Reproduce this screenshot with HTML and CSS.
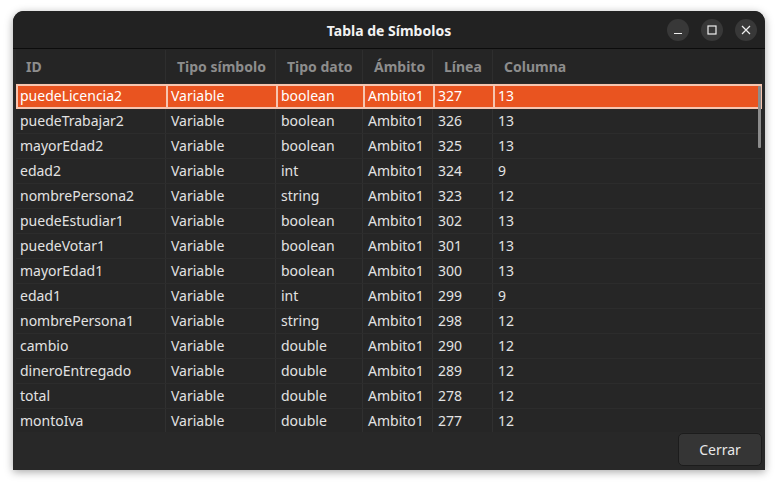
FILE: index.html
```html
<!DOCTYPE html>
<html lang="es">
<head>
<meta charset="utf-8">
<title>Tabla de Símbolos</title>
<link rel="stylesheet" href="styles.css">
</head>
<body>
<div class="window">
  <div class="titlebar">
    <div class="title">Tabla de Símbolos</div>
    <div class="controls">
      <span class="ctl"><svg width="10" height="10" viewBox="0 0 10 10"><path d="M1 8.5h8" stroke="#eee" stroke-width="1.2"/></svg></span>
      <span class="ctl"><svg width="10" height="10" viewBox="0 0 10 10"><rect x="1" y="1" width="8" height="8" fill="none" stroke="#eee" stroke-width="1.2"/></svg></span>
      <span class="ctl"><svg width="10" height="10" viewBox="0 0 10 10"><path d="M1 1l8 8M9 1l-8 8" stroke="#eee" stroke-width="1.2"/></svg></span>
    </div>
  </div>
  <div class="content">
    <div class="table">
      <div class="row head">
        <div class="c">ID</div><div class="c">Tipo símbolo</div><div class="c">Tipo dato</div><div class="c">Ámbito</div><div class="c">Línea</div><div class="c">Columna</div>
      </div>
      <div class="body">
        <div class="row sel"><div class="c">puedeLicencia2</div><div class="c">Variable</div><div class="c">boolean</div><div class="c">Ambito1</div><div class="c">327</div><div class="c">13</div></div>
        <div class="row"><div class="c">puedeTrabajar2</div><div class="c">Variable</div><div class="c">boolean</div><div class="c">Ambito1</div><div class="c">326</div><div class="c">13</div></div>
        <div class="row"><div class="c">mayorEdad2</div><div class="c">Variable</div><div class="c">boolean</div><div class="c">Ambito1</div><div class="c">325</div><div class="c">13</div></div>
        <div class="row"><div class="c">edad2</div><div class="c">Variable</div><div class="c">int</div><div class="c">Ambito1</div><div class="c">324</div><div class="c">9</div></div>
        <div class="row"><div class="c">nombrePersona2</div><div class="c">Variable</div><div class="c">string</div><div class="c">Ambito1</div><div class="c">323</div><div class="c">12</div></div>
        <div class="row"><div class="c">puedeEstudiar1</div><div class="c">Variable</div><div class="c">boolean</div><div class="c">Ambito1</div><div class="c">302</div><div class="c">13</div></div>
        <div class="row"><div class="c">puedeVotar1</div><div class="c">Variable</div><div class="c">boolean</div><div class="c">Ambito1</div><div class="c">301</div><div class="c">13</div></div>
        <div class="row"><div class="c">mayorEdad1</div><div class="c">Variable</div><div class="c">boolean</div><div class="c">Ambito1</div><div class="c">300</div><div class="c">13</div></div>
        <div class="row"><div class="c">edad1</div><div class="c">Variable</div><div class="c">int</div><div class="c">Ambito1</div><div class="c">299</div><div class="c">9</div></div>
        <div class="row"><div class="c">nombrePersona1</div><div class="c">Variable</div><div class="c">string</div><div class="c">Ambito1</div><div class="c">298</div><div class="c">12</div></div>
        <div class="row"><div class="c">cambio</div><div class="c">Variable</div><div class="c">double</div><div class="c">Ambito1</div><div class="c">290</div><div class="c">12</div></div>
        <div class="row"><div class="c">dineroEntregado</div><div class="c">Variable</div><div class="c">double</div><div class="c">Ambito1</div><div class="c">289</div><div class="c">12</div></div>
        <div class="row"><div class="c">total</div><div class="c">Variable</div><div class="c">double</div><div class="c">Ambito1</div><div class="c">278</div><div class="c">12</div></div>
        <div class="row"><div class="c">montoIva</div><div class="c">Variable</div><div class="c">double</div><div class="c">Ambito1</div><div class="c">277</div><div class="c">12</div></div>
        <div class="scrollbar"></div>
      </div>
    </div>
    <div class="footer">
      <button class="btn">Cerrar</button>
    </div>
  </div>
</div>
</body>
</html>
```

FILE: styles.css
```css
html, body {
  margin: 0;
  padding: 0;
  background: #ffffff;
  width: 778px;
  height: 486px;
  overflow: hidden;
}
body {
  font-family: "Noto Sans", "Open Sans", sans-serif;
  font-size: 14px;
}
.window {
  margin: 11px 0 0 13px;
  width: 752px;
  height: 459px;
  border-radius: 11px 11px 0 0;
  background: #242424;
  box-shadow: 0 2px 8px rgba(0,0,0,0.35);
  display: flex;
  flex-direction: column;
  overflow: hidden;
}
.titlebar {
  height: 37px;
  flex: none;
  background: #222222;
  border-bottom: 1px solid #0c0c0c;
  display: flex;
  align-items: center;
  justify-content: center;
  position: relative;
}
.title {
  color: #f2f2f2;
  font-weight: bold;
  font-size: 14px;
  margin-top: 1px;
}
.controls {
  position: absolute;
  right: 8px;
  top: 8px;
  display: flex;
  gap: 12px;
}
.ctl {
  width: 22px;
  height: 22px;
  border-radius: 50%;
  background: #383838;
  display: flex;
  align-items: center;
  justify-content: center;
}
.content {
  flex: 1;
  display: flex;
  flex-direction: column;
  background: #282828;
  padding: 0 3px;
}
.table {
  height: 383px;
  flex: none;
  background: #262626;
  display: flex;
  flex-direction: column;
  overflow: hidden;
}
.row {
  display: grid;
  grid-template-columns: 150px 110px 87px 70px 60px 1fr;
  height: 25px;
  flex: none;
  border-bottom: 1px solid #2c2c2c;
  box-sizing: border-box;
  color: #e2e2e2;
}
.row .c {
  padding-left: 5px;
  line-height: 24px;
  white-space: nowrap;
  overflow: hidden;
  border-right: 1px solid #303030;
}
.row .c:first-child { padding-left: 4px; }
.row .c:last-child { border-right: none; }
.head {
  height: 35px;
  background: #252525;
  border-bottom: 1px solid #2a2a2a;
  color: #8d8d8d;
  font-weight: bold;
}
.head .c {
  line-height: 33px;
  padding-left: 11px;
  border-right: 1px solid #2e2e2e;
  margin-top: 1px;
}
.head .c:first-child { padding-left: 10px; }
.body {
  position: relative;
  display: flex;
  flex-direction: column;
  flex: 1;
  overflow: hidden;
}
.row.sel {
  background: #e95420;
  color: #ffffff;
  border: 2px solid #f6c5b0;
  height: 25px;
}
.row.sel .c {
  line-height: 20px;
  padding-left: 3px;
  border-right: 2px solid #f6c5b0;
}
.row.sel .c:first-child { padding-left: 2px; }
.row.sel .c:last-child { border-right: none; }
.scrollbar {
  position: absolute;
  right: 1px;
  top: 2px;
  width: 3px;
  height: 62px;
  background: #8c8c8c;
  border-radius: 1px;
}
.footer {
  flex: 1;
  display: flex;
  justify-content: flex-end;
  align-items: flex-start;
  padding-top: 1px;
}
.btn {
  width: 84px;
  height: 33px;
  background: #353535;
  border: 1px solid #1c1c1c;
  border-radius: 5px;
  color: #e8e8e8;
  font-family: "Noto Sans", "Open Sans", sans-serif;
  font-size: 14px;
}
```
